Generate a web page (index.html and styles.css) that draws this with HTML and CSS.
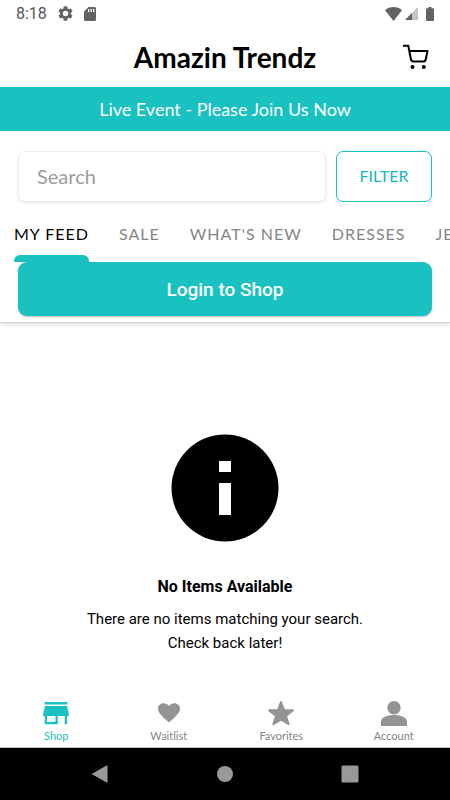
FILE: index.html
```html
<!DOCTYPE html>
<html lang="en">
<head>
<meta charset="utf-8">
<meta name="viewport" content="width=device-width, initial-scale=1">
<title>Amazin Trendz</title>
<link rel="stylesheet" href="styles.css">
</head>
<body>
<div class="status">
  <div class="status-group">
    <span class="clock">8:18</span>
    <svg class="gear" width="15" height="15" viewBox="2 2 20 20"><path d="M19.14 12.94c.04-.3.06-.61.06-.94s-.02-.64-.07-.94l2.03-1.58a.49.49 0 0 0 .12-.61l-1.92-3.32a.49.49 0 0 0-.59-.22l-2.39.96a7 7 0 0 0-1.62-.94l-.36-2.54a.48.48 0 0 0-.48-.41h-3.84a.47.47 0 0 0-.47.41l-.36 2.54c-.59.24-1.13.57-1.62.94l-2.39-.96a.48.48 0 0 0-.59.22L2.74 8.87a.47.47 0 0 0 .12.61l2.03 1.58c-.05.3-.09.63-.09.94s.02.64.07.94l-2.03 1.58a.49.49 0 0 0-.12.61l1.920 3.320c.12.22.37.29.59.22l2.390-.96c.5.38 1.030.7 1.620.94l.36 2.540c.05.24.24.41.48.41h3.840c.24 0 .44-.17.47-.41l.36-2.540a7 7 0 0 0 1.620-.94l2.390.96c.22.08.47 0 .59-.22l1.920-3.320a.47.47 0 0 0-.12-.61zM12 15.600a3.600 3.600 0 1 1 0-7.200 3.600 3.600 0 0 1 0 7.200z"/></svg>
    <svg class="card" width="12" height="14" viewBox="0 0 12 14"><path d="M4.500 0H10.500Q12 0 12 1.500V12.500Q12 14 10.500 14H1.500Q0 14 0 12.500V4.500zM4 2v3h1.300V2zm2.500 0v3h1.300V2zM9 2v3h1.300V2z" fill-rule="evenodd"/></svg>
  </div>
  <div class="status-group">
    <svg width="17" height="14" viewBox="0 0 17 14"><path d="M0 3.300Q3.500 0 8.500 0T17 3.300L8.500 14z"/></svg>
    <svg class="signal" width="13" height="13" viewBox="0 0 13 13"><path d="M13 0V13H0z" fill="#c4c4c4"/><path d="M7 6V13H0z"/></svg>
    <svg class="battery" width="8" height="14" viewBox="0 0 8 14"><path d="M2.500 0h3v1.300H7q1 0 1 1V13q0 1-1 1H1q-1 0-1-1V2.300q0-1 1-1h1.500z"/></svg>
  </div>
</div>
<header class="header">
  <h1 class="title">Amazin Trendz</h1>
  <button class="cart" type="button" aria-label="Cart">
    <svg width="26" height="26" viewBox="0 0 26 26"><path d="M.8 1.800H5.300L7.900 15.300Q8.300 17.500 10.500 17.500H20.300Q22.300 17.500 22.700 15.500L24.500 7H6.300" fill="none" stroke="#000" stroke-width="2" stroke-linecap="round" stroke-linejoin="round"/><circle cx="9.500" cy="23" r="2"/><circle cx="20.800" cy="23" r="2"/></svg>
  </button>
</header>
<div class="banner">Live Event - Please Join Us Now</div>
<section class="controls">
  <form class="search-row">
    <input class="search" type="text" placeholder="Search" aria-label="Search">
    <button class="filter" type="button">FILTER</button>
  </form>
  <nav class="tabs" aria-label="Categories">
    <a class="tab tab-active" href="#feed">MY FEED</a>
    <a class="tab" href="#sale">SALE</a>
    <a class="tab" href="#new">WHAT'S NEW</a>
    <a class="tab" href="#dresses">DRESSES</a>
    <a class="tab" href="#jewelry">JEWELRY</a>
  </nav>
  <button class="login" type="button">Login to Shop</button>
</section>
<main class="empty">
  <svg class="info" width="108" height="108" viewBox="0 0 108 108"><circle cx="54" cy="54" r="53.500"/><path d="M48 27h12v11H48zM48 49h12v32H48z" fill="#fff"/></svg>
  <h2 class="empty-title">No Items Available</h2>
  <p class="empty-text">There are no items matching your search.<br>Check back later!</p>
</main>
<nav class="bottom" aria-label="Main">
  <a class="item item-active" href="#shop">
    <svg width="28" height="28" viewBox="0 0 28 28"><path d="M2.700 4h22.600v2.500H2.700zM3 8h22l2 8.500V18H1v-1.500zM2.700 18H5v6h8.500v-6h2.300v8.300H2.700zM22.700 18H25v8.300h-2.300z"/></svg>
    <span>Shop</span>
  </a>
  <a class="item" href="#waitlist">
    <svg width="28" height="28" viewBox="0 0 28 28"><path d="M14 24.500L12.400 23C6.500 17.700 3 14.600 3 10.700 3 7.600 5.400 5.300 8.500 5.300c2.100 0 4.200 1 5.500 2.700 1.300-1.700 3.400-2.700 5.500-2.700 3.100 0 5.500 2.300 5.500 5.400 0 3.900-3.500 7-9.400 12.300z"/></svg>
    <span>Waitlist</span>
  </a>
  <a class="item" href="#favorites">
    <svg width="28" height="28" viewBox="0 0 28 28"><path d="M14 4l3 7.900 9 .4-7 5.600 2.600 8.300L14 21.700l-7.600 4.500L9 17.900l-7-5.600 9-.4z" stroke="#949494" stroke-width="2" stroke-linejoin="round"/></svg>
    <span>Favorites</span>
  </a>
  <a class="item" href="#account">
    <svg width="28" height="28" viewBox="0 0 28 28"><circle cx="14" cy="9.700" r="6.700"/><path d="M1 28v-4.500C1 19.500 7 17 14 17s13 2.500 13 6.500V28z"/></svg>
    <span>Account</span>
  </a>
</nav>
<div class="system">
  <button class="key" type="button" aria-label="Back"><svg width="18" height="18" viewBox="0 0 18 18"><path d="M15.500.5q1-.5 1 .5v16q0 1-1 .5L1.500 9.600q-1-.6 0-1.200z"/></svg></button>
  <button class="key" type="button" aria-label="Home"><svg width="18" height="18" viewBox="0 0 18 18"><circle cx="9" cy="9" r="8"/></svg></button>
  <button class="key" type="button" aria-label="Recents"><svg width="18" height="18" viewBox="0 0 18 18"><rect x=".5" y=".5" width="17" height="17" rx="1.500"/></svg></button>
</div>
</body>
</html>
```
FILE: styles.css
```css
* {
  box-sizing: border-box;
}

body {
  margin: 0;
  min-height: 100vh;
  display: flex;
  flex-direction: column;
  background: #fff;
  color: #000;
  font-family: Lato, sans-serif;
}

button {
  font-family: inherit;
  cursor: pointer;
}

a {
  text-decoration: none;
}

svg {
  display: block;
  flex: none;
}

.status {
  height: 27px;
  padding: 0 16px;
  display: flex;
  align-items: center;
  justify-content: space-between;
  fill: #636363;
}

.status-group {
  display: flex;
  align-items: center;
}

.clock {
  font: 16px/28px Roboto, sans-serif;
  color: #555;
}

.gear {
  margin-left: 11px;
}

.card {
  margin-left: 11px;
}

.signal {
  margin-left: 3px;
}

.battery {
  margin-left: 8px;
}

.header {
  height: 60px;
  padding: 0 21px;
  display: grid;
  grid-template-columns: 1fr auto 1fr;
  align-items: center;
}

.title {
  grid-column: 2;
  margin: 0;
  font-size: 28px;
  font-weight: 700;
  line-height: 32px;
}

.cart {
  justify-self: end;
  padding: 0;
  border: 0;
  background: none;
}

.banner {
  background: #19c1c1;
  color: #fff;
  font-size: 18px;
  line-height: 44px;
  text-align: center;
}

.controls {
  padding: 20px 18px 6px;
  border-bottom: 1px solid #d8d8d8;
  box-shadow: 0 2px 4px rgba(0, 0, 0, 0.12);
}

.search-row {
  display: flex;
  gap: 10px;
}

.search {
  flex: 1;
  min-width: 0;
  height: 51px;
  padding: 0 18px 2px;
  border: 1px solid #ececec;
  border-radius: 7px;
  box-shadow: 0 1px 2px rgba(0, 0, 0, 0.1);
  font-family: inherit;
  font-size: 20px;
}

.search::placeholder {
  color: #9c9c9c;
}

.filter {
  width: 96px;
  height: 51px;
  padding: 0 0 2px;
  border: 1px solid #19c1c1;
  border-radius: 7px;
  background: #fff;
  color: #19b8b8;
  font-size: 16px;
}

.tabs {
  margin: 0 -18px;
  padding: 0 14px;
  display: flex;
  gap: 30px;
  overflow: hidden;
}

.tab {
  height: 60px;
  flex: none;
  color: #858585;
  font-size: 16px;
  line-height: 64px;
  letter-spacing: 1px;
}

.tab-active {
  color: #000;
}

.tab-active::after {
  content: "";
  display: block;
  height: 7px;
  margin-top: -11px;
  border-radius: 6px 6px 0 0;
  background: #19c1c1;
}

.login {
  display: block;
  width: 100%;
  height: 54px;
  border: 0;
  border-radius: 9px;
  background: #19c1c1;
  box-shadow: 0 1px 2px rgba(0, 0, 0, 0.25);
  color: #fff;
  font-family: Roboto, sans-serif;
  font-size: 19px;
  font-weight: 500;
}

.empty {
  flex: 1;
  display: flex;
  flex-direction: column;
  align-items: center;
  justify-content: center;
  padding-top: 67px;
  font-family: Roboto, sans-serif;
  text-align: center;
}

.empty-title {
  margin: 33px 0 8px;
  font-size: 16px;
  font-weight: 700;
  line-height: 24px;
}

.empty-text {
  margin: 0;
  font-size: 15px;
  line-height: 24px;
}

.bottom {
  height: 50px;
  display: grid;
  grid-template-columns: repeat(4, 1fr);
  border-bottom: 1px solid #bbb;
}

.item {
  display: flex;
  flex-direction: column;
  align-items: center;
  gap: 3px;
  color: #858585;
  fill: #949494;
  font-size: 11px;
  line-height: 14px;
}

.item-active {
  color: #19c1c1;
  fill: #19c1c1;
}

.system {
  height: 52px;
  padding: 0 38px;
  display: grid;
  grid-template-columns: repeat(3, 1fr);
  align-items: center;
  background: #000;
}

.key {
  display: grid;
  place-items: center;
  padding: 0;
  border: 0;
  background: none;
  fill: #999;
}
```
